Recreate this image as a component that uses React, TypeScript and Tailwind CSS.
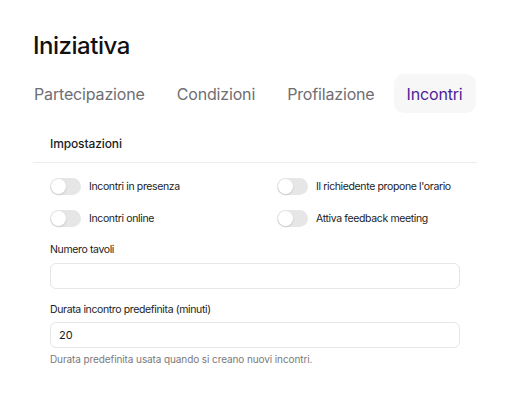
import { useState } from "react";

const font = { fontFamily: "Inter, 'Noto Sans', sans-serif" };

function Toggle({ label }: { label: string }) {
  const [on, setOn] = useState(false);
  return (
    <button
      type="button"
      onClick={() => setOn(!on)}
      className="flex items-center gap-[8px] whitespace-nowrap text-left"
    >
      <span
        className={
          "relative h-[17px] w-[31px] shrink-0 rounded-full " +
          (on ? "bg-[#5b21b6]" : "bg-[#e6e6e6]")
        }
      >
        <span
          className={
            "absolute top-[1px] h-[15px] w-[15px] rounded-full bg-white shadow-[0_1px_2px_rgba(0,0,0,0.15)] " +
            (on ? "left-[15px]" : "left-[1px]")
          }
        />
      </span>
      <span className="text-[10.5px] leading-[17px] tracking-[-0.035em] text-[#1c1c1c]">{label}</span>
    </button>
  );
}

const tabs = ["Partecipazione", "Condizioni", "Profilazione", "Incontri"];

export default function App() {
  const [active, setActive] = useState("Incontri");
  return (
    <div className="min-h-[415px] w-[512px] bg-white" style={font}>
      <div className="px-[33px] pt-[30px]">
        <h1 className="text-[24px] font-medium leading-[32px] tracking-[-0.02em] text-[#111]">
          Iniziativa
        </h1>

        <div className="-ml-[12px] mt-[12px] flex gap-[6px]">
          {tabs.map((t) => (
            <button
              key={t}
              type="button"
              onClick={() => setActive(t)}
              className={
                "h-[39px] rounded-[10px] px-[13px] text-[16px] tracking-[-0.01em] " +
                (active === t ? "bg-[#f7f7f8] text-[#4c1d95]" : "text-[#6e6e73]")
              }
            >
              {t}
            </button>
          ))}
        </div>

        <div className="mt-[22px] w-[444px]">
          <div className="border-b border-[#ececec] px-[17px] pb-[9px]">
            <h2 className="text-[12px] font-medium leading-[18px] tracking-[-0.01em] text-[#1c1c1c]">
              Impostazioni
            </h2>
          </div>

          <div className="px-[17px] pt-[15px]">
            <div className="grid grid-cols-[227px_1fr] gap-y-[15px]">
              <Toggle label="Incontri in presenza" />
              <Toggle label="Il richiedente propone l'orario" />
              <Toggle label="Incontri online" />
              <Toggle label="Attiva feedback meeting" />
            </div>

            <label className="mt-[15px] block text-[10.5px] leading-[16px] tracking-[-0.035em] text-[#1c1c1c]">
              Numero tavoli
            </label>
            <input
              type="text"
              className="mt-[5px] block h-[26px] w-[410px] rounded-[6px] border border-[#e6e6e6] px-[8px] text-[11px] outline-none"
            />

            <label className="mt-[13px] block text-[10.5px] leading-[16px] tracking-[-0.035em] text-[#1c1c1c]">
              Durata incontro predefinita (minuti)
            </label>
            <input
              type="text"
              defaultValue="20"
              className="mt-[4px] block h-[26px] w-[410px] rounded-[6px] border border-[#e6e6e6] px-[8px] text-[11px] text-[#1c1c1c] outline-none"
            />
            <p className="mt-[4px] text-[10px] leading-[14px] tracking-[-0.01em] text-[#7a7a7a]">
              Durata predefinita usata quando si creano nuovi incontri.
            </p>
          </div>
        </div>
      </div>
    </div>
  );
}
